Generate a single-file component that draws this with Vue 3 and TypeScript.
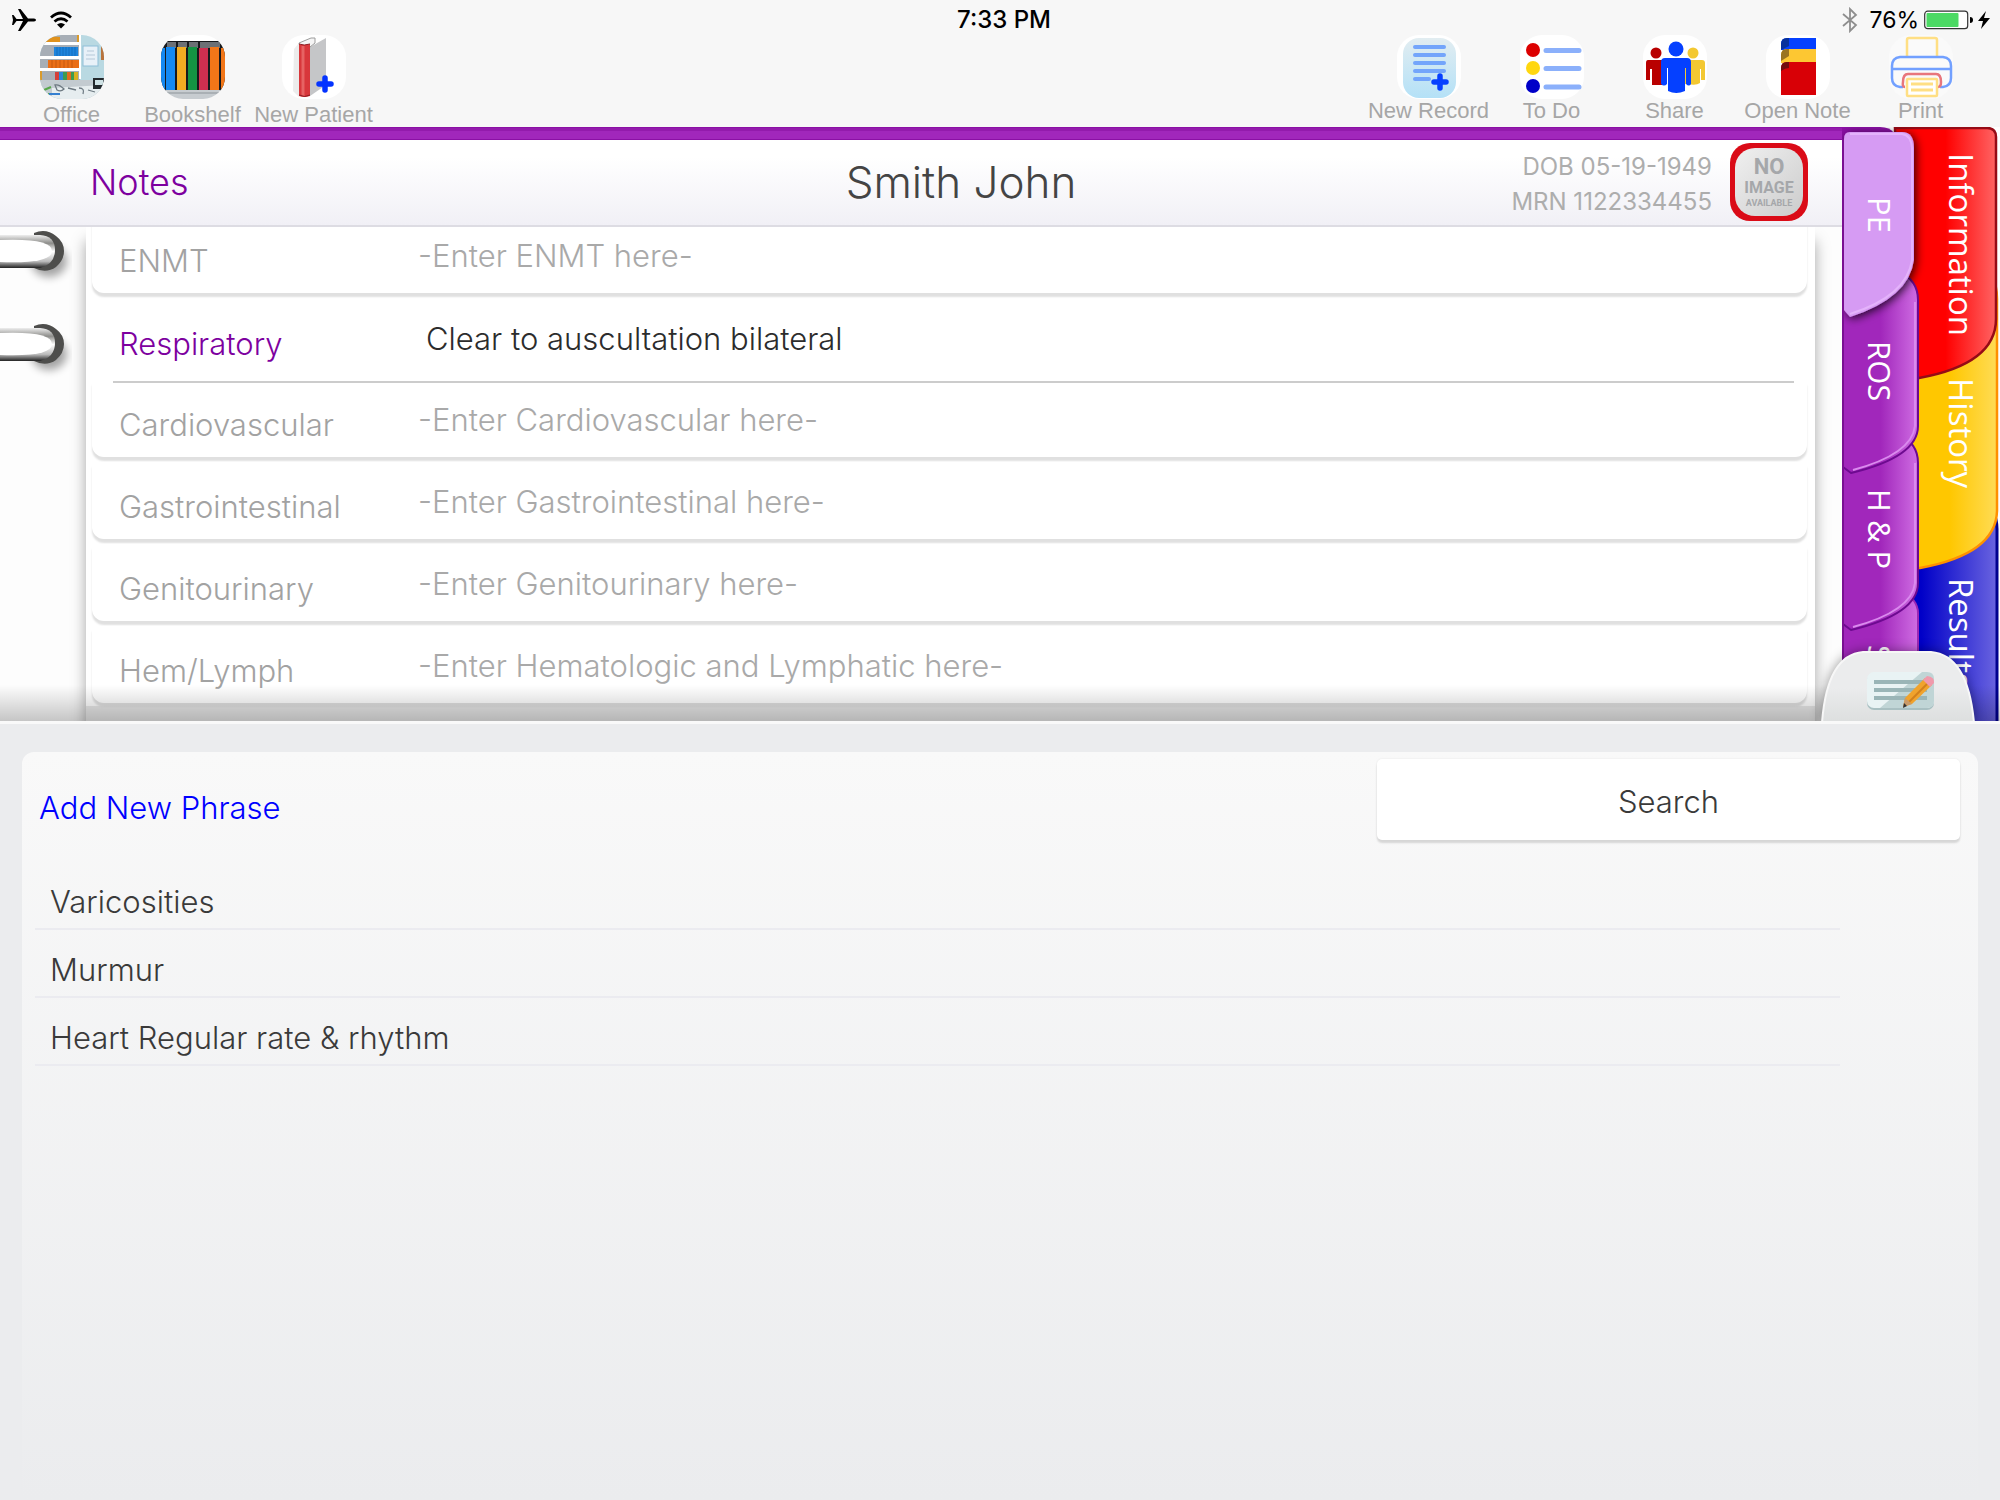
<script setup lang="ts">
import { ref } from 'vue'

interface Finding { id: string; label: string; hint: string; value: string }
interface Tab { name: string; size: number }

const findings = ref<Finding[]>([
  { id: 'enmt', label: 'ENMT', hint: '-Enter ENMT here-', value: '' },
  { id: 'resp', label: 'Respiratory', hint: '', value: 'Clear to auscultation bilateral' },
  { id: 'cardio', label: 'Cardiovascular', hint: '-Enter Cardiovascular here-', value: '' },
  { id: 'gi', label: 'Gastrointestinal', hint: '-Enter Gastrointestinal here-', value: '' },
  { id: 'gu', label: 'Genitourinary', hint: '-Enter Genitourinary here-', value: '' },
  { id: 'hem', label: 'Hem/Lymph', hint: '-Enter Hematologic and Lymphatic here-', value: '' },
])

const noteTabs: Tab[] = [
  { name: 'PE', size: 144 },
  { name: 'ROS', size: 148 },
  { name: 'H & P', size: 156 },
  { name: 'S', size: 156 },
]
const chartTabs: Tab[] = [
  { name: 'Information', size: 225 },
  { name: 'History', size: 200 },
  { name: 'Results', size: 200 },
]

const phrases: string[] = ['Varicosities', 'Murmur', 'Heart Regular rate & rhythm']
const paper: number[] = [12, 20, 28, 36]
const rings: string[] = ['upper', 'lower']
</script>

<template>
  <div class="app">
    <header class="top">
      <div class="status">
        <div class="status-left">
          <svg width="24" height="22" viewBox="0 0 24 22"><path d="M0 6h1.500l3 4H11L6 0h2.500l7.500 9.500h6q2 .3 2 1.500t-2 1.500h-6L8.500 22H6l5-10H4.500l-3 4H0l1-5z" /></svg>
          <svg width="24" height="18" viewBox="0 0 24 18"><path d="M2 6.500Q12-2.500 22 6.500M5.500 10.500q6.500-5.500 13 0" fill="none" stroke="#000" stroke-width="2.800" /><path d="M8 13.500q4-3 8 0l-4 4z" /></svg>
        </div>
        <div class="clock">7:33 PM</div>
        <div class="status-right">
          <svg width="16" height="26" viewBox="0 0 16 26"><path d="M1 7l13 11-6 6V2l6 6L1 19" fill="none" stroke="#8e8e8e" stroke-width="1.800" /></svg>
          <span class="pct">76%</span>
          <svg width="49" height="20" viewBox="0 0 49 20"><rect x=".7" y="1.200" width="43" height="17.500" rx="3" fill="#fff" stroke="#333" stroke-width="1.200" /><rect x="2.500" y="3" width="32" height="14" rx="1" fill="#4cd964" /><path d="M46 7q3 0 3 3t-3 3z" /></svg>
          <svg width="12" height="18" viewBox="0 0 12 18"><path d="M8 0L0 10h5L3 18l9-11H6z" /></svg>
        </div>
      </div>
      <nav class="tools">
        <div class="group left">
          <button type="button" class="tool">
            <svg class="ico" viewBox="0 0 64 64">
              <defs><clipPath id="round"><rect width="64" height="64" rx="22" /></clipPath></defs>
              <g clip-path="url(#round)">
                <rect width="64" height="64" fill="#b9d9e2" />
                <rect width="40" height="46" fill="#a7aeb6" />
                <path d="M5 1l15 1v5H5z" fill="#e0921c" /><path d="M37 0h3v7h-3zM0 36h2v9H0z" fill="#d99a2c" />
                <path d="M14 12h24v9H14z" fill="#1d84dc" /><path d="M8 25h31v9H8z" fill="#ea6f17" />
                <path d="M17 12v9m3-9v9m3-9v9m3-9v9m3-9v9m3-9v9m3-9v9" stroke="#1266b4" stroke-width=".7" />
                <path d="M12 25v9m4-9v9m4-9v9m4-9v9m4-9v9m4-9v9" stroke="#b8500c" stroke-width=".7" />
                <path d="M15 37h4v8h-4z" fill="#d6403a" /><path d="M19 37h4v8h-4z" fill="#2b86d8" /><path d="M23 37h4v8h-4z" fill="#3d9b50" /><path d="M27 37h4v8h-4z" fill="#e06a20" /><path d="M31 37h3v8h-3z" fill="#3d9b50" /><path d="M34 37h4v8h-4z" fill="#d8b021" />
                <path d="M0 7h40v3H0zM0 21h40v3H0zM0 33h40v3H0zM39 0h2v44h-2z" fill="#fff" />
                <rect x="43" y="11" width="15" height="20" fill="#e8f1f8" stroke="#8fbfd8" /><path d="M47 16h7m-8 4h9m-9 4h9" stroke="#b5c8d8" />
                <path d="M61 11h3v14h-3z" fill="#b8733c" />
                <path d="M0 45h52l12 10v9H0z" fill="#c3cbd0" /><path d="M12 53l52-3v14H12z" fill="#e6edef" />
                <rect x="53" y="43" width="11" height="11" fill="#23282c" /><rect x="55" y="45" width="8" height="5" fill="#cfe2e5" />
                <path d="M4 55l7-3M8 59h11" stroke="#58a84c" stroke-width="2" /><path d="M9 59h11" stroke="#347fd0" stroke-width="2" />
                <path d="M15 50q4-1 9 4-3 3-7 1zM28 53l8 2m3-2q6 0 4 6m5-4l7 2" fill="none" stroke="#6d7981" stroke-width="1.300" />
              </g>
            </svg>
            <span>Office</span>
          </button>
          <button type="button" class="tool">
            <svg class="ico" viewBox="0 0 64 64">
              <rect width="64" height="64" rx="22" fill="#fff" />
              <g clip-path="url(#round)">
                <rect y="6" width="64" height="50" fill="#17191c" />
                <path d="M6 7h9v6H6zm11 0h9v6h-9zm11 0h9v6h-9zm11 0h20v6H39z" fill="#6c7075" />
                <path d="M0 13h4v42H0zM5 12h9v43H5z" fill="#1489f2" /><path d="M16 12h9v43h-9z" fill="#f2ac22" /><path d="M27 12h9v43h-9z" fill="#139443" /><path d="M38 13h9v42h-9z" fill="#cf2f50" /><path d="M49 12h9v43h-9zM60 13h4v42h-4z" fill="#f27618" />
                <path d="M0 55h64v9H0z" fill="#c7ccd0" /><path d="M0 58h64" stroke="#8d9499" />
              </g>
            </svg>
            <span>Bookshelf</span>
          </button>
          <button type="button" class="tool">
            <svg class="ico" viewBox="0 0 64 64">
              <rect width="64" height="64" rx="22" fill="#fff" />
              <path d="M12 14l5-6v54l-6-6z" fill="#ececec" />
              <path d="M28 12L44 3v47L28 61z" fill="#c5c6c8" /><path d="M17 8l12-5h4v5l-5 4H18z" fill="#f5f5f5" stroke="#9c9c9c" stroke-width="1" />
              <path d="M17 9q5 2 11 0v52q-6 2-11 0z" fill="#d8373b" /><path d="M21 11v50" stroke="#e66363" stroke-width="3" /><path d="M17 9q5 2 11 0m-11 51q6 3 11 0" fill="none" stroke="#8e1d22" />
              <path d="M43 43v12m-6-6h12" stroke="#0433ff" stroke-width="5.500" stroke-linecap="round" />
            </svg>
            <span>New Patient</span>
          </button>
        </div>
        <div class="group right">
          <button type="button" class="tool">
            <svg class="ico" viewBox="0 0 64 64">
              <defs><linearGradient id="sky" x2="0" y2="1"><stop stop-color="#e2edf1" /><stop offset="1" stop-color="#b4e1f7" /></linearGradient></defs>
              <rect width="64" height="64" rx="22" fill="#fff" /><rect x="6" y="3" width="53" height="60" rx="16" fill="url(#sky)" />
              <path v-for="y in paper" :key="y" :d="`M18 ${y}h29`" stroke="#73a5fb" stroke-width="4" stroke-linecap="round" />
              <path d="M18 44h14" stroke="#73a5fb" stroke-width="4" stroke-linecap="round" />
              <path d="M43 41v12m-6-6h12" stroke="#0740ff" stroke-width="5.500" stroke-linecap="round" />
            </svg>
            <span>New Record</span>
          </button>
          <button type="button" class="tool">
            <svg class="ico" viewBox="0 0 64 64">
              <rect width="64" height="64" rx="22" fill="#fff" />
              <circle cx="13" cy="15" r="7" fill="#dc0000" /><circle cx="13" cy="33" r="7" fill="#ffd70f" /><circle cx="13" cy="51" r="7" fill="#0000c8" />
              <path d="M26 15.500h33M26 33.500h33M26 52h33" stroke="#8bb0fb" stroke-width="5" stroke-linecap="round" />
            </svg>
            <span>To Do</span>
          </button>
          <button type="button" class="tool">
            <svg class="ico" viewBox="0 0 64 64">
              <rect width="64" height="64" rx="22" fill="#fff" />
              <g fill="#b90000"><circle cx="13" cy="18" r="5.500" /><path d="M5 25h18v25H9V34H7v11H3V28q0-3 2-3z" /></g>
              <g fill="#f3c832"><circle cx="50" cy="18" r="5.500" /><path d="M41 25h18q3 0 3 3v17h-4V34h-1v14q-4 3-12 1h-4z" /></g>
              <g fill="#0540ff"><circle cx="33" cy="14" r="7.500" /><path d="M22 23h22q4 0 4 4v22q-2 3-5 0V33h-1v23q-9 4-17 0V33h-1v16q-3 3-6 0V27q0-4 4-4z" /></g>
            </svg>
            <span>Share</span>
          </button>
          <button type="button" class="tool">
            <svg class="ico" viewBox="0 0 64 64">
              <rect width="64" height="64" rx="22" fill="#fff" />
              <path d="M15 9q0-6 6-6h29v12H15z" fill="#0540ff" /><path d="M15 9q0-6 6-6h2v8l-8 4z" fill="#07309c" />
              <path d="M15 20q0-6 6-6h29v14H15z" fill="#fdc732" /><path d="M15 20q0-6 6-6h2v7l-8 5z" fill="#9b7420" />
              <path d="M15 33q0-6 6-6h29v33H15z" fill="#d80006" /><path d="M15 33q0-6 6-6h2v6q-4 0-8 3z" fill="#720b10" />
            </svg>
            <span>Open Note</span>
          </button>
          <button type="button" class="tool">
            <svg class="ico" viewBox="0 0 64 64" fill="none" stroke-width="2.500">
              <rect width="64" height="64" rx="22" fill="#fafafa" />
              <path d="M18 22V5q0-2 2-2h26q2 0 2 2v17" stroke="#ffdf84" />
              <path d="M14 52h-3q-8-1-8-9V31q0-8 8-9h43q8 1 8 9v12q0 8-8 9h-3M3 34h59" stroke="#72a0ff" />
              <path d="M16 52q-3 0-2-5 0-8 5-8h28q5 0 5 8 0 5-3 5" stroke="#e8767c" />
              <rect x="18" y="44" width="30" height="17" rx="1" fill="#fff" stroke="#ffdf84" /><path d="M22 49h22M22 55h22" stroke="#ffdf84" stroke-width="3" />
            </svg>
            <span>Print</span>
          </button>
        </div>
      </nav>
    </header>

    <main class="book">
      <section class="page">
        <div class="title">
          <h2>Notes</h2>
          <h1>Smith John</h1>
          <div class="patient">
            <div class="ids"><div>DOB 05-19-1949</div><div>MRN 1122334455</div></div>
            <div class="photo">
              <div class="blank"><span class="n1">NO</span><span class="n2">IMAGE</span><span class="n3">AVAILABLE</span></div>
            </div>
          </div>
        </div>
        <div class="sheet">
          <div class="rings">
            <svg v-for="r in rings" :key="r" width="72" height="58" viewBox="0 0 72 58">
              <defs>
                <linearGradient id="metal" x2="0" y2="1"><stop stop-color="#eee" /><stop offset=".25" stop-color="#8d8d8a" /><stop offset=".5" stop-color="#fff" /><stop offset=".8" stop-color="#bbb" /><stop offset="1" stop-color="#222" /></linearGradient>
                <filter id="soft" x="-50%" y="-50%" width="200%" height="200%"><feGaussianBlur stdDeviation="4" /></filter>
              </defs>
              <ellipse cx="49" cy="32" rx="18" ry="16" fill="#000" opacity=".35" filter="url(#soft)" />
              <path d="M34 4q12-5 22 3 8 6 8 15t-8 16q-10 7-22 1z" fill="#4e4e4c" />
              <path d="M0 6h40q15 1 15 15T40 39H0z" fill="url(#metal)" />
              <path d="M0 11q52-2 52 11T0 33z" fill="#fff" />
            </svg>
          </div>
          <form class="list" @submit.prevent>
            <div v-for="f in findings" :key="f.id" class="row" :class="{ filled: f.value }">
              <label :for="f.id">{{ f.label }}</label>
              <input :id="f.id" v-model="f.value" type="text" :placeholder="f.hint" />
            </div>
          </form>
        </div>
      </section>

      <aside class="tabs">
        <svg class="shapes" width="158" height="594" viewBox="0 0 158 594">
          <defs>
            <linearGradient id="red"><stop offset=".5" stop-color="#ff0000" /><stop offset="1" stop-color="#ff6464" /></linearGradient>
            <linearGradient id="yel"><stop offset=".5" stop-color="#ffc700" /><stop offset="1" stop-color="#ffdc55" /></linearGradient>
            <linearGradient id="blu"><stop offset=".2" stop-color="#0000c8" /><stop offset="1" stop-color="#6a64e0" /></linearGradient>
            <linearGradient id="pur"><stop offset=".5" stop-color="#a127bb" /><stop offset="1" stop-color="#cf6de3" /></linearGradient>
            <filter id="drop" x="-30%" y="-30%" width="160%" height="160%"><feDropShadow dx="2" dy="2" stdDeviation="5" flood-opacity=".8" /></filter>
          </defs>
          <path d="M60 380h90q5 12 5 22v200H60z" fill="url(#blu)" stroke="#00008f" stroke-width="3" />
          <path d="M60 150h90q5 8 5 22v212q-1 43-77 57H60z" fill="url(#yel)" stroke="#ff9000" stroke-width="2.500" />
          <path d="M53 1h92q9 0 9 9v182q0 45-77 59H60z" fill="url(#red)" stroke="#960b16" stroke-width="2.500" />
          <path d="M0 460h56q20 12 20 26v118H0z" fill="url(#pur)" stroke="#9b27b5" stroke-width="2" />
          <path d="M1 308h56q19 8 19 28v120q0 31-67 47l-8-6z" fill="url(#pur)" stroke="#6d0a90" stroke-width="2" />
          <path d="M73 336v120q-3 28-62 44" fill="none" stroke="#da8aee" stroke-width="2" />
          <path d="M1 145h56q19 8 19 28v126q0 31-67 47l-8-6z" fill="url(#pur)" stroke="#6d0a90" stroke-width="2" />
          <path d="M73 175v124q-3 28-62 44" fill="none" stroke="#da8aee" stroke-width="2" />
          <path d="M0 0h38q10 0 14 6v8H0z" fill="#8b10a5" />
          <path d="M2 12q0-7 6-7h52q12 0 12 16v112q-5 38-64 57l-6-7z" fill="#d69bf3" filter="url(#drop)" />
          <path d="M8 7h52q9 1 10 14v112q-5 36-62 54" fill="none" stroke="#e4b3fb" stroke-width="2" />
          <path d="M1 12v582" stroke="#7a1092" stroke-width="2" />
        </svg>
        <div class="col minor">
          <button v-for="t in noteTabs" :key="t.name" type="button" :style="{ height: `${t.size}px` }">{{ t.name }}</button>
        </div>
        <div class="col major">
          <button v-for="t in chartTabs" :key="t.name" type="button" :style="{ height: `${t.size}px` }">{{ t.name }}</button>
        </div>
        <button type="button" class="edit" aria-label="Edit phrases">
          <svg width="154" height="70" viewBox="0 0 154 70">
            <defs><linearGradient id="grip" x2="0" y2="1"><stop offset=".5" stop-color="#ebeced" /><stop offset="1" stop-color="#dcdede" /></linearGradient></defs>
            <path d="M1 72Q6 4 42 1h68q37 3 43 71z" fill="url(#grip)" stroke="#f7f7f7" stroke-width="2" />
            <rect x="46" y="23" width="67" height="36" rx="7" fill="#a9c0c2" /><rect x="46" y="21" width="67" height="36" rx="7" fill="#e9f3f4" />
            <path d="M59 57L101 21h5q7 0 7 7v22q0 7-7 7z" fill="#c0d5d6" />
            <path d="M53 31h53m-53 8h53m-53 8h53" stroke="#9ab5b7" stroke-width="4" />
            <path d="M84 47l20-20 7 7-20 19-9 3z" fill="#f0a32d" /><path d="M88 51l20-20" stroke="#d2801c" stroke-width="2" /><path d="M84 47l7 6-9 3z" fill="#c99a68" /><path d="M83 52l3 3-4 2z" fill="#333" /><path d="M102 29l4-4q8 1 7 7l-4 4z" fill="#f09aac" />
          </svg>
        </button>
      </aside>
    </main>

    <section class="panel">
      <div class="card">
        <div class="bar">
          <a href="#new-phrase">Add New Phrase</a>
          <button type="button" class="search">Search</button>
        </div>
        <ul>
          <li v-for="p in phrases" :key="p">{{ p }}</li>
        </ul>
      </div>
    </section>
  </div>
</template>

<style>
body { margin: 0; }
</style>

<style scoped>
* { box-sizing: border-box; }
.app { min-height: 100vh; display: flex; flex-direction: column; background: #f7f7f7; font-family: Inter, "Liberation Sans", sans-serif; font-weight: 300; color: #3a3a3a; }
button { border: 0; padding: 0; background: none; font: inherit; color: inherit; cursor: pointer; }
svg { display: block; flex: none; }

.top { height: 127px; background: #f7f7f7; }
.status { height: 35px; padding: 5px 10px 0 12px; display: grid; grid-template-columns: 1fr auto 1fr; align-items: center; color: #000; font-size: 23px; line-height: 30px; }
.status-left { display: flex; align-items: center; gap: 13px; }
.clock { font-weight: 500; font-size: 24px; padding-left: 6px; }
.status-right { display: flex; align-items: center; justify-content: flex-end; gap: 5px; }
.pct { font-weight: 400; padding-left: 6px; }
.tools { display: flex; justify-content: space-between; }
.group { display: flex; }
.left { padding-left: 11px; }
.right { padding-right: 18px; }
.tool { width: 121px; display: flex; flex-direction: column; align-items: center; font: 22px/24px "Liberation Sans", sans-serif; color: #a6a6a6; }
.left .tool { gap: 4px; }
.right .tool { width: 123px; }
.tool span { white-space: nowrap; }
.ico { width: 64px; height: 64px; }

.book { height: 594px; display: flex; position: relative; overflow: hidden; background: #fff; }
.book::after { content: ""; position: absolute; inset: auto 0 0 0; height: 36px; background: linear-gradient(rgba(0, 0, 0, 0), rgba(0, 0, 0, .22)); pointer-events: none; }
.page { flex: 1; min-width: 0; display: flex; flex-direction: column; padding-top: 13px; background: linear-gradient(#8b10a5 0 1px, #931bac 1px 4px, #a127bb 4px 12px, #8b10a5 12px 13px, #fff 13px); }
.title { height: 87px; flex: none; display: grid; grid-template-columns: 1fr auto 1fr; align-items: center; padding: 0 10px 2px 90px; background: linear-gradient(#fff 20%, #f1f0f6); border-bottom: 2px solid #dddce3; }
h1, h2 { margin: 0; font-weight: 300; }
h2 { font-size: 36px; color: #7d009f; }
h1 { font-size: 44px; color: #444; }
.patient { display: flex; justify-content: flex-end; align-items: center; gap: 18px; padding-right: 24px; }
.ids { text-align: right; font-size: 24px; line-height: 35px; font-weight: 400; color: #adadad; padding-top: 4px; }
.photo { width: 78px; height: 78px; padding: 5px; border-radius: 20px; background: #da0b17; display: flex; }
.blank { flex: 1; border-radius: 20px; background: linear-gradient(135deg, #f0f0f0, #ccc); display: flex; flex-direction: column; align-items: center; justify-content: center; color: #a5a7aa; font-weight: 700; font-family: Roboto, sans-serif; }
.n1 { font-size: 22px; line-height: 24px; }
.n2 { font-size: 16px; line-height: 18px; }
.n3 { font-size: 9px; line-height: 12px; }

.sheet { flex: 1; min-height: 0; display: flex; overflow: hidden; padding-right: 27px; background: #fdfdfd; }
.rings { width: 86px; flex: none; display: flex; flex-direction: column; gap: 35px; padding-top: 2px; }
.list { flex: 1; min-width: 0; display: flex; flex-direction: column; justify-content: flex-end; padding: 0 8px 13px 6px; background: linear-gradient(#fff 97%, #e9e9e9 97%); box-shadow: 0 14px 14px rgba(0, 0, 0, .35); }
.row { height: 82px; flex: none; display: flex; align-items: center; padding: 10px 14px 0 27px; }
.row:not(.filled) { height: 77px; margin-bottom: 5px; padding-top: 12px; background: #fff; border-radius: 4px 4px 12px 12px; box-shadow: 0 4px 2px #e0e0e0; }
.filled { position: relative; }
.filled::after { content: ""; position: absolute; inset: auto 13px -3px 21px; height: 2px; background: #ccc; z-index: 1; }
label { width: 299px; flex: none; font-size: 31px; line-height: 40px; color: #a2a2a2; }
.filled label { color: #7d009f; }
input { flex: 1; min-width: 0; border: 0; outline: 0; background: none; padding: 0 0 10px; font: inherit; font-size: 31px; line-height: 40px; color: #2c2c2c; }
.filled input { padding-left: 8px; }
input::placeholder { color: #a9a9a9; opacity: 1; }

.tabs { width: 158px; flex: none; position: relative; display: flex; color: #fff; font-family: "Open Sans", sans-serif; }
.shapes { position: absolute; left: 0; top: 0; }
.col { position: relative; display: flex; flex-direction: column; overflow: hidden; }
.col button { writing-mode: vertical-rl; text-align: left; line-height: 40px; font-weight: 400; flex: none; white-space: nowrap; display: flex; align-items: center; }
.minor { width: 76px; font-size: 31px; padding-top: 70px; }
.minor button { width: 76px; }
.major { width: 82px; font-size: 33px; padding: 26px 0 0 4px; }
.major button { width: 78px; }
.edit { position: absolute; left: -21px; bottom: 0; z-index: 1; filter: drop-shadow(0 0 6px rgba(0, 0, 0, .4)); }

.panel { flex: 1; display: flex; padding: 28px 22px 0; background: #ebecee; border-top: 3px solid #f9f9f9; }
.card { flex: 1; min-width: 0; border-radius: 12px 12px 0 0; background: linear-gradient(#f9f9f9, #ebecee); padding: 7px 18px 0 13px; }
.bar { display: flex; align-items: center; justify-content: space-between; padding-left: 4px; }
a { color: #00f; text-decoration: none; font-size: 31px; line-height: 40px; padding-top: 16px; }
.search { width: 583px; height: 81px; padding-top: 4px; border-radius: 5px; background: #fff; box-shadow: 0 3px 2px #d6d6d6, 0 0 2px #e4e4e4; font-size: 31px; }
ul { margin: 22px 120px 0 0; padding: 0; list-style: none; }
li { height: 68px; padding: 20px 15px 0; font-size: 31px; line-height: 40px; border-bottom: 2px solid #ebebf0; }
</style>
